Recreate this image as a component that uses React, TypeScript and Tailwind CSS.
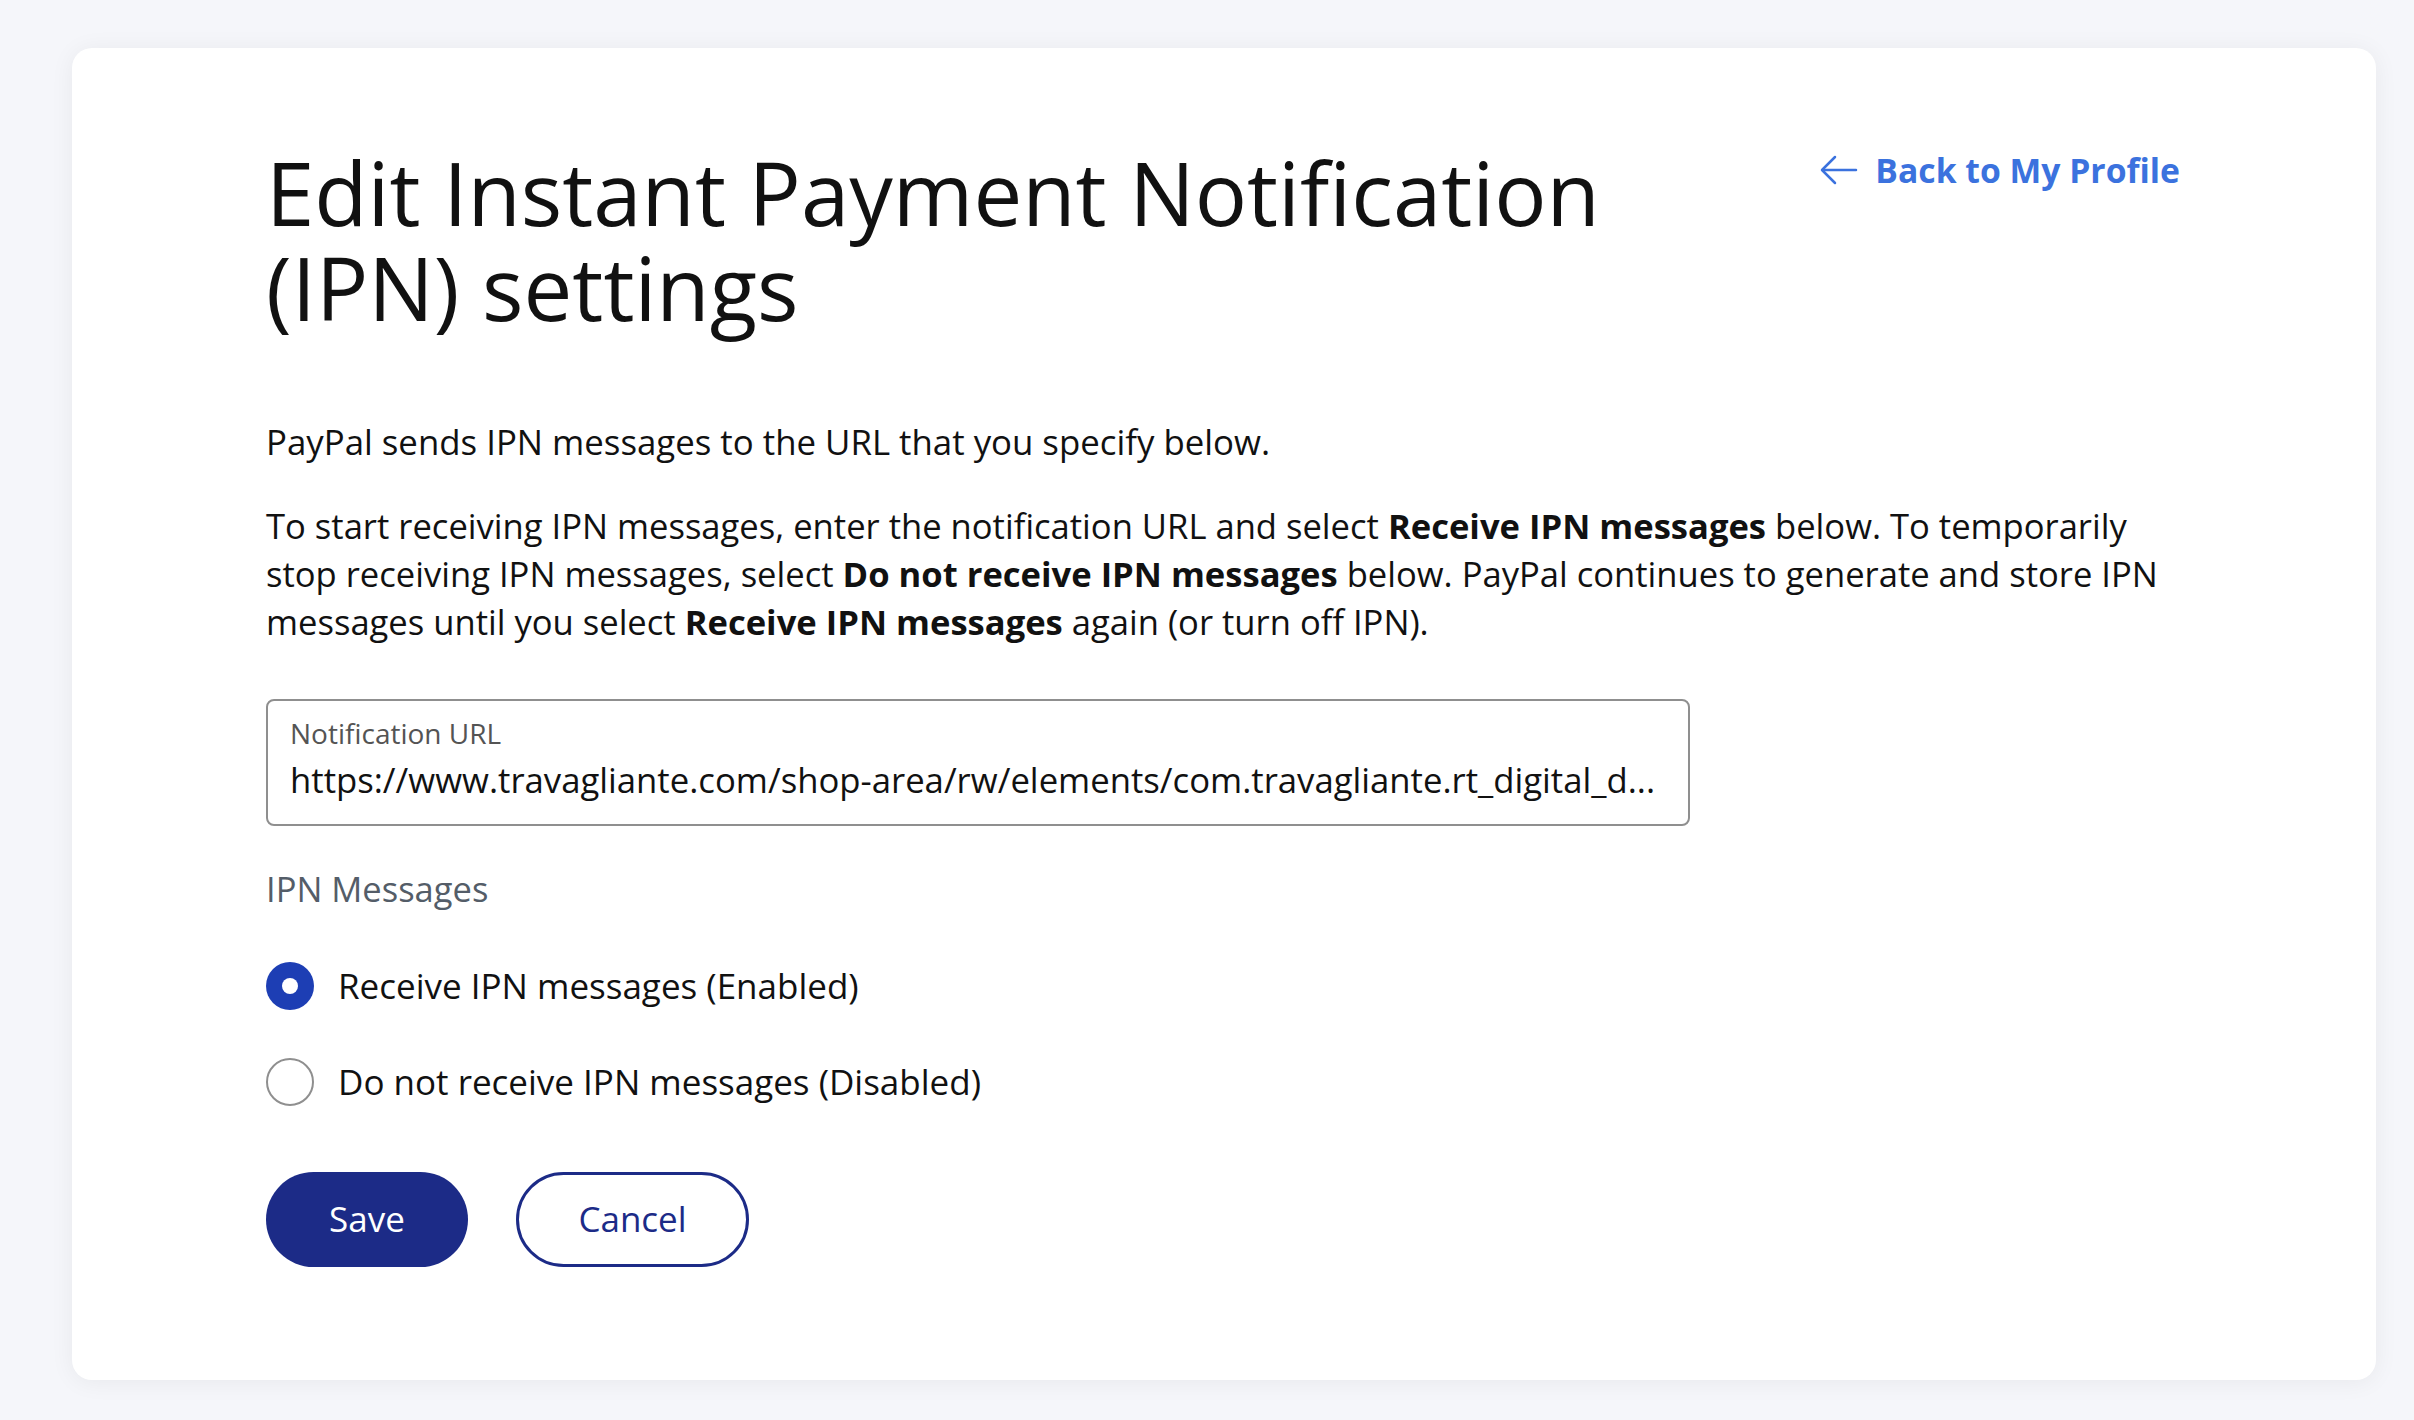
import React from "react";

export default function App() {
  const font = { fontFamily: "'Open Sans', 'Noto Sans', sans-serif" };
  return (
    <div className="min-h-[1420px] w-full bg-[#f5f6fa] pt-[48px] pl-[72px] pr-[38px] pb-[40px]" style={font}>
      <div className="w-[2304px] h-[1332px] rounded-[20px] bg-white shadow-[0_2px_24px_rgba(0,0,0,0.06)] pl-[194px] pr-[196px] pt-[97px]">
        <div className="flex items-start justify-between">
          <h1 className="text-[87px] leading-[95px] text-[#111111] font-normal max-w-[1450px]">
            Edit Instant Payment Notification (IPN) settings
          </h1>
          <a className="mt-[5px] flex items-center gap-[17px] text-[#3b72de] text-[33.7px] font-bold leading-[40px]" href="#">
            <svg width="38" height="30" viewBox="0 0 38 30" fill="none" stroke="#3b72de" strokeWidth="2.5" strokeLinecap="round" strokeLinejoin="round">
              <path d="M36 15H3" />
              <path d="M15 2L2 15l13 13" />
            </svg>
            Back to My Profile
          </a>
        </div>

        <p className="mt-[83px] text-[34.8px] leading-[48px] text-[#111111]">
          PayPal sends IPN messages to the URL that you specify below.
        </p>
        <p className="mt-[36px] text-[34.6px] leading-[48px] text-[#111111]">
          To start receiving IPN messages, enter the notification URL and select <b>Receive IPN messages</b> below. To temporarily stop receiving IPN messages, select <b>Do not receive IPN messages</b> below. PayPal continues to generate and store IPN messages until you select <b>Receive IPN messages</b> again (or turn off IPN).
        </p>

        <div className="mt-[53px] w-[1424px] h-[127px] rounded-[8px] border-2 border-[#8f8f8f] px-[22px] pt-[15px]">
          <div className="text-[28px] leading-[34px] text-[#545454]">Notification URL</div>
          <div className="mt-[8px] text-[34.7px] leading-[44px] text-[#111111] whitespace-nowrap">
            https://www.travagliante.com/shop-area/rw/elements/com.travagliante.rt_digital_d...
          </div>
        </div>

        <div className="mt-[43px] text-[34.5px] leading-[40px] text-[#545d68]">IPN Messages</div>

        <div className="mt-[53px] flex flex-col gap-[48px]">
          <label className="flex items-center gap-[24px] text-[35px] leading-[48px] text-[#111111]">
            <span className="w-[48px] h-[48px] rounded-full bg-[#1d3eb4] flex items-center justify-center">
              <span className="w-[16px] h-[16px] rounded-full bg-white" />
            </span>
            Receive IPN messages (Enabled)
          </label>
          <label className="flex items-center gap-[24px] text-[35px] leading-[48px] text-[#111111]">
            <span className="w-[48px] h-[48px] rounded-full border-2 border-[#8f8f8f] bg-white" />
            Do not receive IPN messages (Disabled)
          </label>
        </div>

        <div className="mt-[66px] flex gap-[48px]">
          <button className="w-[202px] h-[95px] rounded-full bg-[#1c2b87] text-white text-[35px]">Save</button>
          <button className="w-[233px] h-[95px] rounded-full border-[3px] border-[#1c2b87] text-[#1c2b87] text-[35px] bg-white">Cancel</button>
        </div>
      </div>
    </div>
  );
}
